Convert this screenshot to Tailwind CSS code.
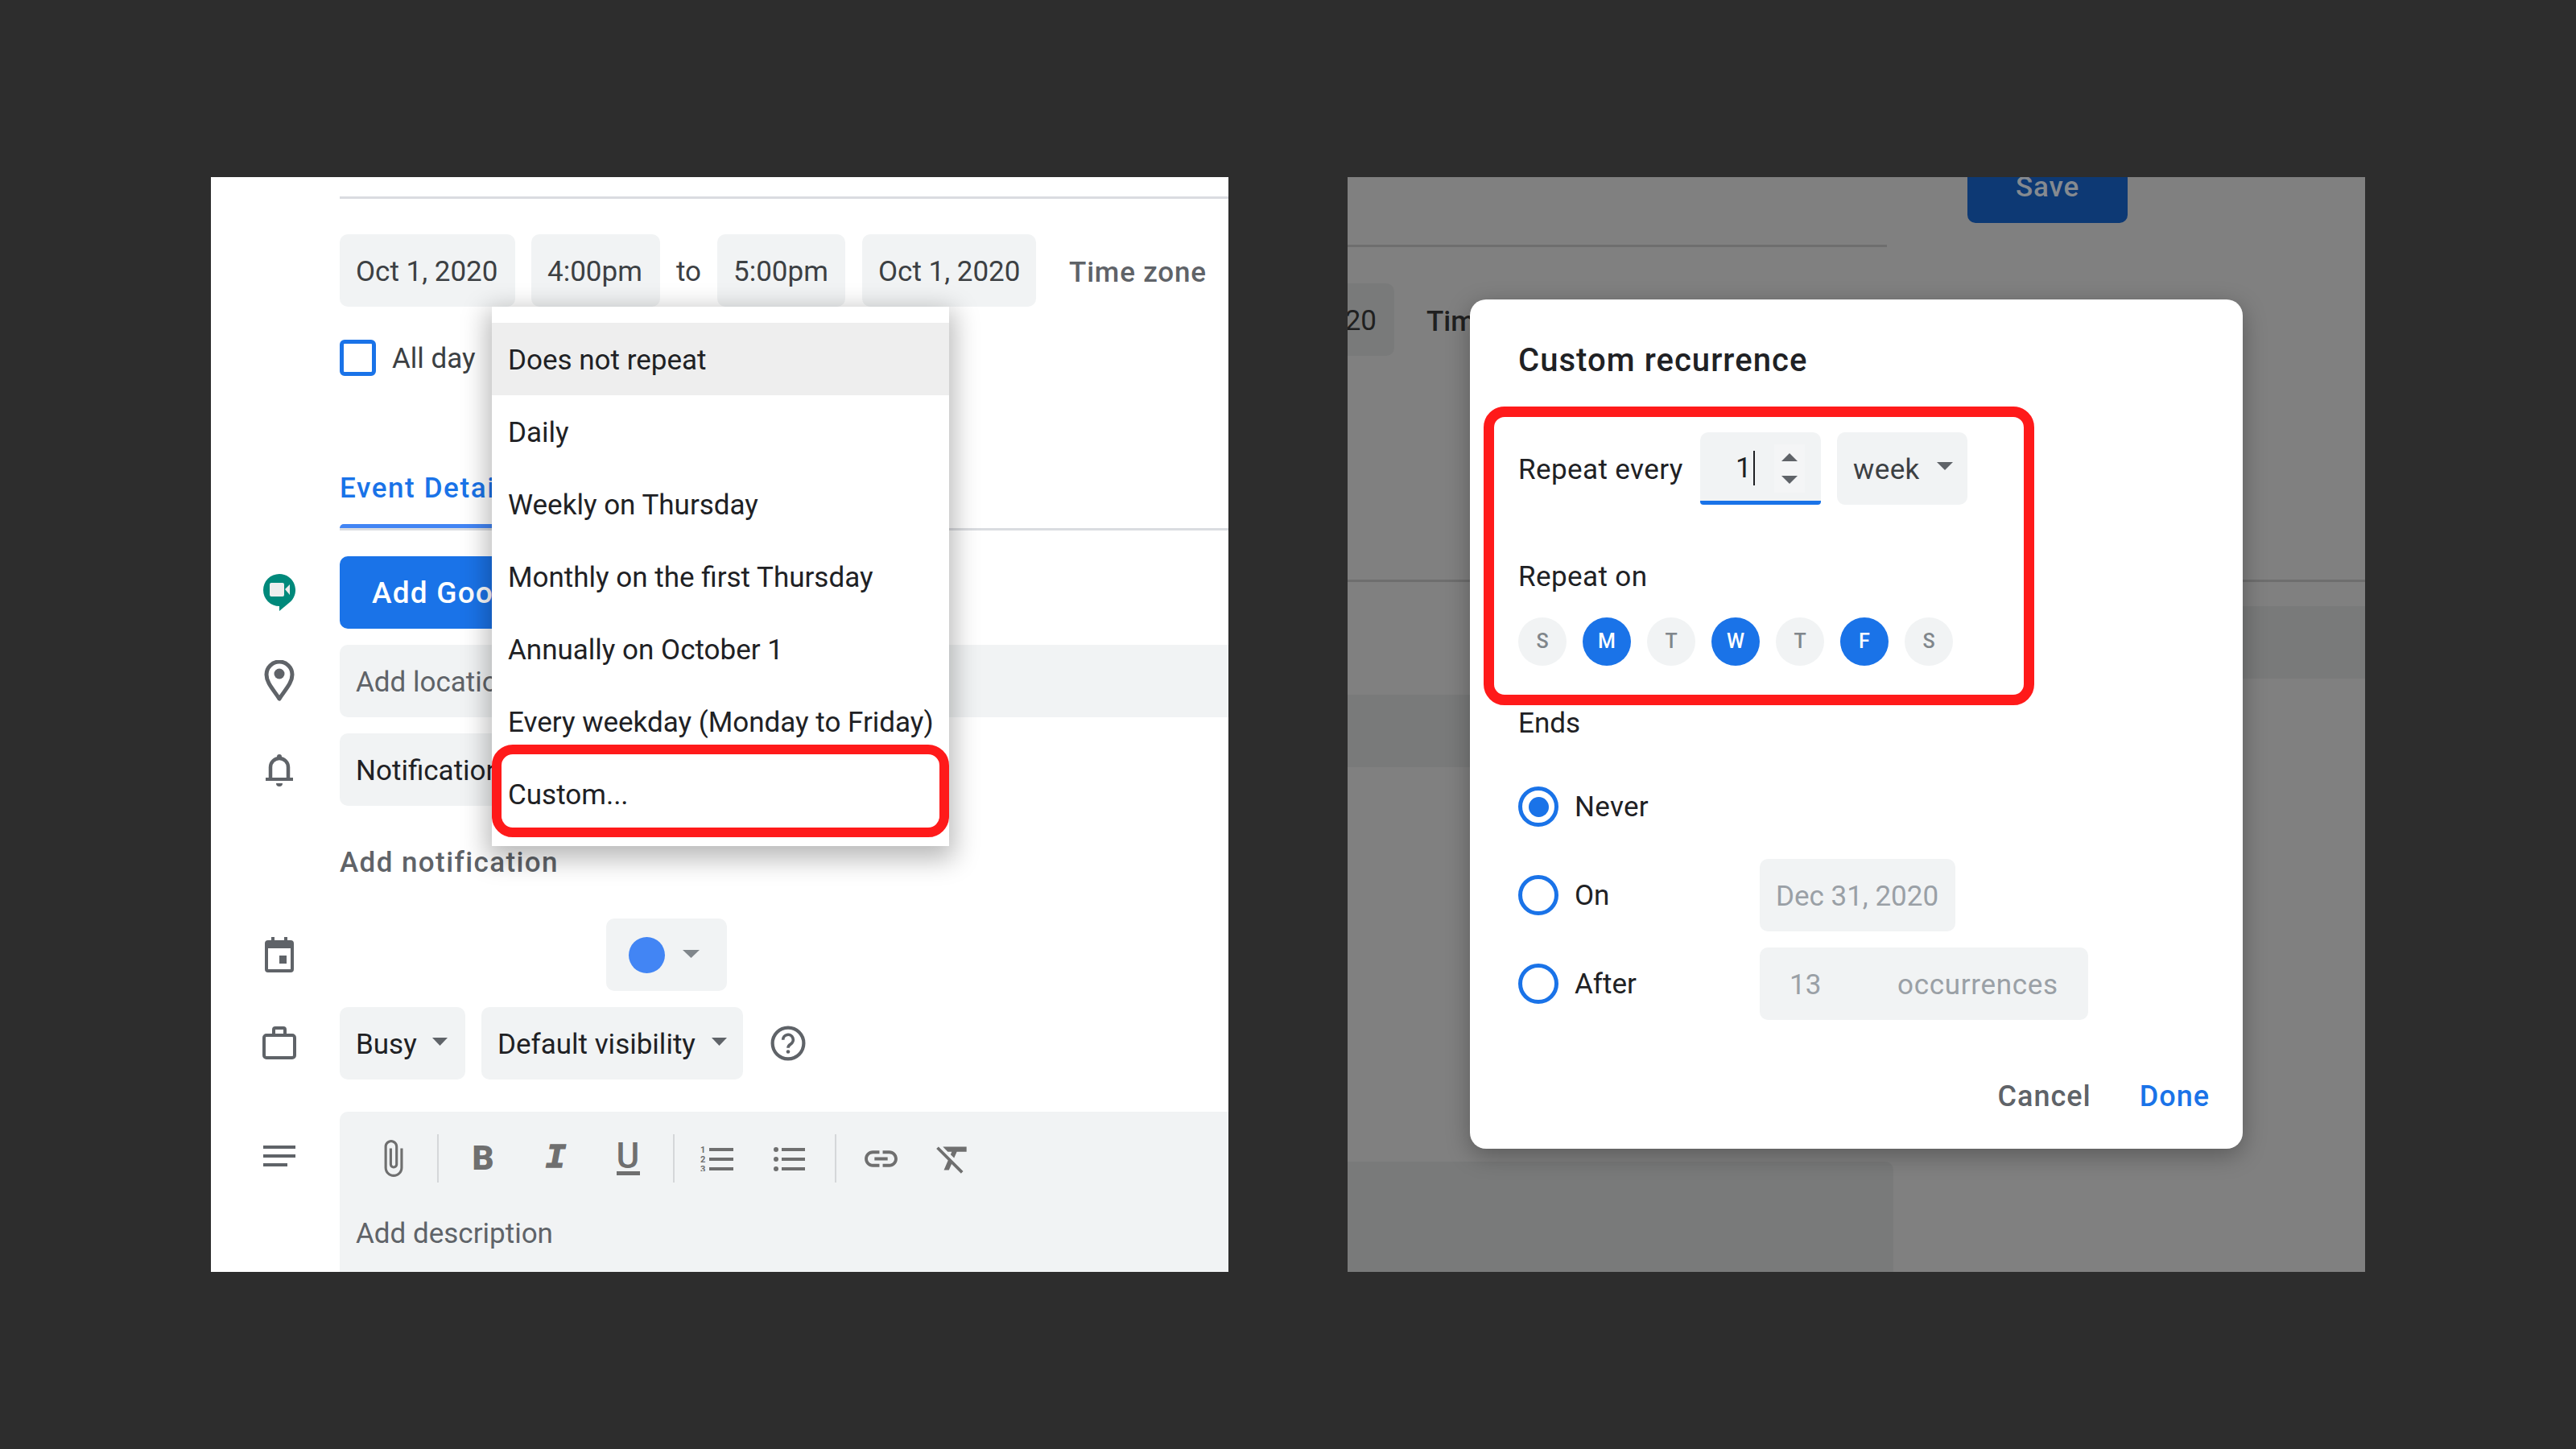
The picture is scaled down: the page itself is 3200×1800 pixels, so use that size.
<!DOCTYPE html>
<html lang="en">
  <head>
    <meta charset="UTF-8" />
    <title>Custom recurrence</title>
    <script src="https://cdn.jsdelivr.net/npm/@tailwindcss/browser@4"></script>
  </head>
  <body class="bg-[#2d2d2d] font-['Roboto',sans-serif] text-[35px] leading-[40px] text-[#3c4043]">
    <div class="w-[3200px] h-[1800px] pt-[220px] pl-[262px] flex gap-[148px]">

      <!-- event form -->
      <div class="relative w-[1264px] h-[1360px] bg-white overflow-hidden">
        <div class="ml-[160px] mt-[24px] h-[3px] bg-[#dadce0]"></div>

        <div class="ml-[160px] mt-[44px] flex items-center gap-5 h-[90px] whitespace-nowrap">
          <div class="h-[90px] w-[218px] px-5 pt-[3px] flex items-center rounded-[10px] bg-[#f1f3f4]">Oct 1, 2020</div>
          <div class="h-[90px] w-[160px] px-5 pt-[3px] flex items-center rounded-[10px] bg-[#f1f3f4]">4:00pm</div>
          <div class="w-[31px] pt-[3px]">to</div>
          <div class="h-[90px] w-[159px] px-5 pt-[3px] flex items-center rounded-[10px] bg-[#f1f3f4]">5:00pm</div>
          <div class="ml-[1px] h-[90px] w-[216px] px-5 pt-[3px] flex items-center rounded-[10px] bg-[#f1f3f4]">Oct 1, 2020</div>
          <div class="ml-[21px] mt-[6px] font-medium tracking-[0.8px] text-[#5f6368]">Time zone</div>
        </div>

        <div class="ml-[160px] mt-[41px] flex items-center h-[45px]">
          <div class="w-[45px] h-[45px] rounded-[6px] border-[5px] border-[#1a73e8]"></div>
          <div class="ml-5 pt-[2px]">All day</div>
        </div>

        <div class="ml-[160px] mt-[120px] h-[40px] font-medium tracking-[1.6px] text-[#1a73e8] whitespace-nowrap">Event Details</div>
        <div class="ml-[160px] mt-[24px] w-[240px] h-[5px] rounded-t-[5px] bg-[#4285f4]"></div>
        <div class="ml-[160px] h-[3px] bg-[#dadce0]"></div>

        <div class="mt-[32px] pl-[65px] flex items-center h-[90px]">
          <svg class="w-10 mr-[55px]" viewBox="0 0 40 46" height="46">
            <path d="M20 0a20 20 0 0 1 12 36l-12 10v-6A20 20 0 0 1 20 0z" fill="#00897b" />
            <rect x="8" y="11" width="18" height="17" rx="2" fill="#eeeeee" />
            <path d="M27 19l6-6v13z" fill="#eeeeee" />
          </svg>
          <div class="h-[90px] w-[500px] pl-10 pt-[2px] flex items-center rounded-[10px] bg-[#1a73e8] text-white font-medium text-[37px] tracking-[1.2px] whitespace-nowrap">Add Google Meet video conferencing</div>
        </div>

        <div class="mt-5 pl-[65px] flex items-center h-[90px]">
          <svg class="mr-[55px]" width="40" height="52" viewBox="0 0 40 52">
            <path d="M20 48C12 36 4 28 4 18a16 16 0 0 1 32 0c0 10-8 18-16 30z" fill="none" stroke="#5f6368" stroke-width="5" stroke-linejoin="round" />
            <circle cx="20" cy="17" r="6.5" fill="#5f6368" />
          </svg>
          <div class="h-[90px] flex-1 pl-5 pt-[3px] flex items-center rounded-l-[10px] bg-[#f1f3f4] text-[#5f6368]">Add location</div>
        </div>

        <div class="mt-5 pl-[65px] flex items-center h-[90px]">
          <svg class="mr-[55px]" width="40" height="42" viewBox="0 0 40 42">
            <path d="M9 32V18a11 11 0 0 1 22 0v14" fill="none" stroke="#5f6368" stroke-width="4.5" />
            <circle cx="20" cy="5" r="3" fill="#5f6368" />
            <rect x="3" y="31" width="34" height="4" fill="#5f6368" />
            <path d="M16 38h8a4 4 0 0 1-8 0z" fill="#5f6368" />
          </svg>
          <div class="h-[90px] w-[400px] pl-5 pt-[3px] flex items-center rounded-[10px] bg-[#f1f3f4] text-[#202124] whitespace-nowrap">Notification</div>
        </div>

        <div class="ml-[160px] mt-[51px] h-[40px] font-medium tracking-[1.4px] text-[#5f6368]">Add notification</div>

        <div class="mt-[49px] pl-[65px] flex items-center h-[90px]">
          <svg class="mr-[386px]" width="40" height="44" viewBox="0 0 40 44">
            <path d="M10 0h4v4h12V0h4v4h4a4 4 0 0 1 4 4v32a4 4 0 0 1-4 4H6a4 4 0 0 1-4-4V8a4 4 0 0 1 4-4h4zM6 14v26h28V14z" fill="#5f6368" fill-rule="evenodd" />
            <rect x="20" y="23" width="9" height="10" fill="#5f6368" />
          </svg>
          <div class="h-[90px] w-[150px] pl-7 flex items-center rounded-[10px] bg-[#f1f3f4]">
            <div class="w-[45px] h-[45px] rounded-full bg-[#4285f4]"></div>
            <svg class="ml-[22px] -mt-[3px]" width="21" height="10" viewBox="0 0 21 10"><path d="M0 0h21L10.500 10z" fill="#80868b" /></svg>
          </div>
        </div>

        <div class="mt-5 pl-[64px] flex items-center h-[90px]">
          <svg class="mr-[54px]" width="42" height="42" viewBox="0 0 42 42">
            <path d="M14 10V4a2 2 0 0 1 2-2h10a2 2 0 0 1 2 2v6" fill="none" stroke="#5f6368" stroke-width="4" />
            <rect x="2" y="11" width="38" height="28" rx="3" fill="none" stroke="#5f6368" stroke-width="4" />
          </svg>
          <div class="h-[90px] w-[156px] pl-5 pt-[3px] flex items-center rounded-[10px] bg-[#f1f3f4] text-[#202124]">
            Busy
            <svg class="ml-[19px] -mt-[8px]" width="19" height="10" viewBox="0 0 19 10"><path d="M0 0h19L9.500 10z" fill="#5f6368" /></svg>
          </div>
          <div class="ml-5 h-[90px] w-[325px] pl-5 pt-[3px] flex items-center rounded-[10px] bg-[#f1f3f4] text-[#202124] whitespace-nowrap">
            Default visibility
            <svg class="ml-[20px] -mt-[8px]" width="19" height="10" viewBox="0 0 19 10"><path d="M0 0h19L9.500 10z" fill="#5f6368" /></svg>
          </div>
          <svg class="ml-[34px]" width="44" height="44" viewBox="0 0 42 42">
            <circle cx="21" cy="21" r="18.500" fill="none" stroke="#5f6368" stroke-width="4" />
            <path d="M15 17a6 6 0 1 1 9 5c-2 1.200-3 2.500-3 4.500" fill="none" stroke="#5f6368" stroke-width="3.500" />
            <circle cx="21" cy="31" r="2.200" fill="#5f6368" />
          </svg>
        </div>

        <div class="mt-10 pl-[65px] flex">
          <svg class="mr-[55px] mt-[42px]" width="40" height="26" viewBox="0 0 40 26">
            <rect y="0" width="40" height="4" fill="#5f6368" />
            <rect y="11" width="40" height="4" fill="#5f6368" />
            <rect y="22" width="30" height="4" fill="#5f6368" />
          </svg>
          <div class="flex-1 h-[199px] rounded-tl-[10px] bg-[#f1f3f4]">
            <div class="flex items-center pl-[41px] pt-[26px] h-[90px] text-[#6f6f6f]">
              <svg width="50" height="50" viewBox="0 0 24 24" fill="#6f6f6f"><path d="M16.500 6v11.500c0 2.210-1.790 4-4 4s-4-1.790-4-4V5c0-1.380 1.120-2.500 2.500-2.500s2.500 1.120 2.500 2.500v10.500c0 .55-.45 1-1 1s-1-.45-1-1V6H10v9.500c0 1.380 1.120 2.500 2.500 2.500s2.500-1.120 2.500-2.500V5c0-2.210-1.790-4-4-4S7 2.790 7 5v12.500c0 3.040 2.460 5.500 5.500 5.500s5.500-2.460 5.500-5.500V6h-1.500z" /></svg>
              <div class="ml-[30px] w-[2px] h-[60px] bg-[#d5d7d9]"></div>
              <div class="ml-[25px] w-[60px] text-center font-black text-[42px]">B</div>
              <div class="ml-[30px] w-[60px] text-center font-['Liberation_Mono'] font-bold italic text-[42px] [-webkit-text-stroke:1.5px_#6f6f6f]">I</div>
              <div class="ml-[30px] w-[60px] flex flex-col items-center">
                <div class="font-medium text-[44px] leading-[36px] h-[36px]">U</div>
                <div class="mt-[1px] w-[29px] h-[5px] bg-[#6f6f6f]"></div>
              </div>
              <div class="ml-[26px] w-[2px] h-[60px] bg-[#d5d7d9]"></div>
              <svg class="ml-[32px]" width="41" height="32" viewBox="0 0 41 32" fill="#6f6f6f">
                <text x="0" y="9" font-size="11" font-family="Roboto" font-weight="700">1</text>
                <text x="0" y="21" font-size="11" font-family="Roboto" font-weight="700">2</text>
                <text x="0" y="33" font-size="11" font-family="Roboto" font-weight="700">3</text>
                <rect x="11" y="3" width="30" height="4" />
                <rect x="11" y="15" width="30" height="4" />
                <rect x="11" y="27" width="30" height="4" />
              </svg>
              <svg class="ml-[50px]" width="39" height="32" viewBox="0 0 39 32" fill="#6f6f6f">
                <circle cx="3" cy="5" r="3" />
                <circle cx="3" cy="17" r="3" />
                <circle cx="3" cy="29" r="3" />
                <rect x="10" y="3" width="29" height="4" />
                <rect x="10" y="15" width="29" height="4" />
                <rect x="10" y="27" width="29" height="4" />
              </svg>
              <div class="ml-[37px] w-[2px] h-[60px] bg-[#d5d7d9]"></div>
              <svg class="ml-[31px]" width="49" height="49" viewBox="0 0 24 24" fill="#6f6f6f"><path d="M3.900 12c0-1.710 1.390-3.100 3.100-3.100h4V7H7c-2.760 0-5 2.240-5 5s2.240 5 5 5h4v-1.900H7c-1.710 0-3.100-1.390-3.100-3.100zM8 13h8v-2H8v2zm9-6h-4v1.900h4c1.710 0 3.100 1.390 3.100 3.100s-1.390 3.100-3.100 3.100h-4V17h4c2.760 0 5-2.240 5-5s-2.240-5-5-5z" /></svg>
              <svg class="ml-[40px]" width="50" height="50" viewBox="0 0 24 24" fill="#6f6f6f"><path d="M3.270 5L2 6.270l6.970 6.970L6.500 19h3l1.570-3.660L16.730 21 18 19.730 3.550 5.270 3.270 5zM6 5v.18L8.820 8h2.400l-.72 1.680 2.100 2.100L14.210 8H20V5H6z" /></svg>
            </div>
            <div class="pl-5 mt-[42px] text-[#5f6368]">Add description</div>
          </div>
        </div>

        <!-- repeat dropdown -->
        <div class="absolute left-[349px] top-[161px] w-[568px] py-5 bg-white text-[#202124] whitespace-nowrap shadow-[0_10px_30px_6px_rgba(0,0,0,0.28)]">
          <div class="h-[90px] px-5 pt-[3px] flex items-center bg-[#eeeeee]">Does not repeat</div>
          <div class="h-[90px] px-5 pt-[3px] flex items-center">Daily</div>
          <div class="h-[90px] px-5 pt-[3px] flex items-center">Weekly on Thursday</div>
          <div class="h-[90px] px-5 pt-[3px] flex items-center">Monthly on the first Thursday</div>
          <div class="h-[90px] px-5 pt-[3px] flex items-center">Annually on October 1</div>
          <div class="h-[90px] px-5 pt-[3px] flex items-center">Every weekday (Monday to Friday)</div>
          <div class="h-[90px] px-5 pt-[3px] flex items-center">Custom...</div>
          <div class="absolute left-0 top-[544px] w-[568px] h-[115px] border-[12px] border-[#ff1a1a] rounded-[26px]"></div>
        </div>
      </div>

      <!-- dimmed form with the dialog on top -->
      <div class="relative w-[1264px] h-[1360px] bg-[#808080] overflow-hidden">
        <div class="ml-[770px] w-[199px] h-[57px] rounded-b-[10px] bg-[#0d3974] text-[#858a90] text-center font-medium tracking-[0.8px] leading-[26px]">Save</div>
        <div class="mt-[27px] w-[670px] h-[3px] bg-[#6e6e6e]"></div>
        <div class="mt-[45px] flex items-center h-[90px] text-[#202020]">
          <div class="w-[58px] h-[90px] pr-[22px] pt-[3px] rounded-r-[10px] bg-[#797a7a] flex items-center justify-end">20</div>
          <div class="ml-[40px] mt-[6px] font-medium">Time zone</div>
        </div>
        <div class="mt-[278px] h-[3px] bg-[#6e6e6e]"></div>
        <div class="mt-[30px] ml-[1112px] h-[90px] bg-[#797a7a]"></div>
        <div class="mt-[20px] w-[152px] h-[90px] bg-[#797a7a]"></div>
        <div class="mt-[490px] w-[678px] h-[138px] rounded-tr-[10px] bg-[#797a7a]"></div>

        <div class="absolute left-[152px] top-[152px] w-[960px] h-[1055px] pl-[60px] pt-[52px] rounded-[20px] bg-white text-[#202124] shadow-[0_8px_30px_rgba(0,0,0,0.3)]">
          <div class="text-[40px] leading-[48px] font-medium tracking-[1.05px]">Custom recurrence</div>

          <div class="mt-[65px] flex items-center h-[90px] tracking-[0.4px]">
            <div class="w-[226px] pt-[3px]">Repeat every</div>
            <div class="relative w-[150px] h-[90px] rounded-t-[10px] rounded-b-[4px] border-b-[5px] border-[#1a73e8] bg-[#f1f3f4]">
              <div class="absolute left-[44px] top-[25px]">1</div>
              <div class="absolute left-[66px] top-[23px] w-[2px] h-[43px] bg-[#202124]"></div>
              <div class="absolute left-[92px] top-[15px] w-[38px] h-[60px] flex flex-col items-center justify-between py-[11px] bg-[#f4f5f6]">
                <svg width="20" height="10" viewBox="0 0 20 10"><path d="M10 0l10 10H0z" fill="#5f6368" /></svg>
                <svg width="20" height="10" viewBox="0 0 20 10"><path d="M0 0h20L10 10z" fill="#5f6368" /></svg>
              </div>
            </div>
            <div class="ml-5 w-[162px] h-[90px] pl-5 pt-[3px] flex items-center rounded-[10px] bg-[#f1f3f4] text-[#3c4043]">
              week
              <svg class="ml-[21px] -mt-[10px]" width="20" height="10" viewBox="0 0 20 10"><path d="M0 0h20L10 10z" fill="#5f6368" /></svg>
            </div>
          </div>

          <div class="mt-[70px] tracking-[0.4px]">Repeat on</div>
          <div class="mt-[30px] flex gap-5 text-[25px] font-medium">
            <div class="w-[60px] h-[60px] rounded-full flex items-center justify-center bg-[#f1f3f4] text-[#80868b]">S</div>
            <div class="w-[60px] h-[60px] rounded-full flex items-center justify-center bg-[#1a73e8] text-white">M</div>
            <div class="w-[60px] h-[60px] rounded-full flex items-center justify-center bg-[#f1f3f4] text-[#80868b]">T</div>
            <div class="w-[60px] h-[60px] rounded-full flex items-center justify-center bg-[#1a73e8] text-white">W</div>
            <div class="w-[60px] h-[60px] rounded-full flex items-center justify-center bg-[#f1f3f4] text-[#80868b]">T</div>
            <div class="w-[60px] h-[60px] rounded-full flex items-center justify-center bg-[#1a73e8] text-white">F</div>
            <div class="w-[60px] h-[60px] rounded-full flex items-center justify-center bg-[#f1f3f4] text-[#80868b]">S</div>
          </div>

          <div class="mt-[50px] pt-[2px] h-[40px]">Ends</div>

          <div class="mt-[60px] flex items-center h-[50px]">
            <div class="w-[50px] h-[50px] rounded-full border-[5px] border-[#1a73e8] flex items-center justify-center">
              <div class="w-[25px] h-[25px] rounded-full bg-[#1a73e8]"></div>
            </div>
            <div class="ml-[20px] pt-[2px] tracking-[0.3px]">Never</div>
          </div>

          <div class="mt-[40px] flex items-center h-[90px]">
            <div class="w-[50px] h-[50px] rounded-full border-[5px] border-[#1a73e8]"></div>
            <div class="ml-[20px] w-[230px] pt-[2px]">On</div>
            <div class="w-[243px] h-[90px] pl-5 pt-[3px] flex items-center rounded-[10px] bg-[#f1f3f4] text-[#9aa0a6]">Dec 31, 2020</div>
          </div>

          <div class="mt-5 flex items-center h-[90px]">
            <div class="w-[50px] h-[50px] rounded-full border-[5px] border-[#1a73e8]"></div>
            <div class="ml-[20px] w-[230px] pt-[2px]">After</div>
            <div class="w-[408px] h-[90px] pl-[37px] pt-[3px] flex items-center rounded-[10px] bg-[#f1f3f4] text-[#9aa0a6]">
              <div class="w-[134px]">13</div>
              <div class="tracking-[0.7px]">occurrences</div>
            </div>
          </div>

          <div class="mt-[75px] pr-[41px] flex justify-end gap-[60px] font-medium text-[36px] tracking-[1px]">
            <div class="text-[#5f6368]">Cancel</div>
            <div class="text-[#1a73e8]">Done</div>
          </div>

          <div class="absolute left-[17px] top-[133px] w-[684px] h-[371px] border-[13px] border-[#ff1a1a] rounded-[26px]"></div>
        </div>
      </div>
    </div>
  </body>
</html>
